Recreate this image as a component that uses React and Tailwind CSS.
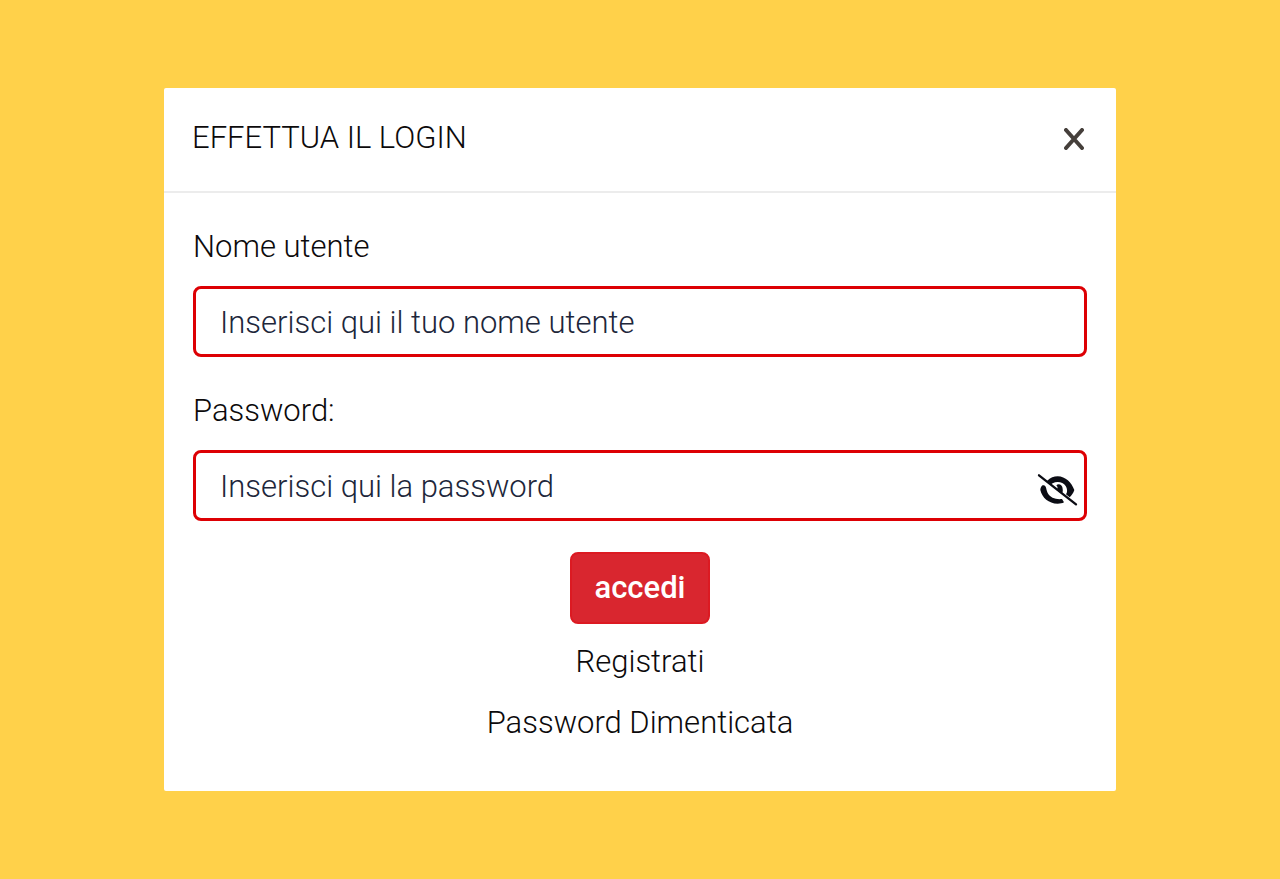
import React, { useState } from 'react';

function EyeSlashIcon() {
  return (
    <svg viewBox="0 0 123 102" className="w-[41px] h-[34px]" fill="none" aria-hidden="true">
      <path
        d="M30 24C40 13 51 10 62 10C86 11 103 28 112 51C109 60 104 67 98 73L87 64C92 57 91 47 86 39C79 29 62 23 47 31L42 34Z"
        fill="#0b0c14"
      />
      <path
        d="M15 38C11 42 10 47 10 51C15 74 35 92 62 92C70 92 76 91 81 88L75 78C57 80 40 75 32 60C29 53 28 46 26 41C23 37 18 36 15 38Z"
        fill="#0b0c14"
      />
      <path d="M58 37C65 30 77 36 77 48C78 54 77 59 74 62L58 50C63 48 63 42 58 37Z" fill="#0b0c14" />
      <path d="M6 7L117 94" stroke="#0b0c14" strokeWidth="7" strokeLinecap="round" />
    </svg>
  );
}

function Field({ id, label, children, ...props }) {
  return (
    <div>
      <label htmlFor={id} className="block mb-[15px] leading-[48px] text-[#0c0a0b]">
        {label}
      </label>
      <div className="flex items-center h-[71px] border-3 border-[#dd0004] rounded-lg">
        <input
          id={id}
          className="flex-1 min-w-0 h-full pl-6 pt-0.5 bg-transparent text-[#20263a] placeholder:text-[#20263a] placeholder:opacity-100 focus:outline-none"
          {...props}
        />
        {children}
      </div>
    </div>
  );
}

function App() {
  const [username, setUsername] = useState('');
  const [password, setPassword] = useState('');
  const [showPassword, setShowPassword] = useState(false);

  const handleSubmit = (e) => {
    e.preventDefault();
  };

  return (
    <main className="flex items-center justify-center min-h-screen bg-[#ffd14a] font-['Roboto',sans-serif] text-[31px] font-light">
      <div className="w-full max-w-[952px] bg-white rounded-xs">
        <header className="flex items-center justify-between h-[105px] pl-7 pr-8 pb-0.5 border-b-2 border-[#ececec]">
          <h1 className="text-[#0c0a0b]">EFFETTUA IL LOGIN</h1>
          <button type="button" aria-label="Chiudi">
            <svg viewBox="0 0 20 22" className="w-5 h-[22px]" fill="none" aria-hidden="true">
              <path d="M2 2L18 20M18 2L2 20" stroke="#453f3b" strokeWidth="4" strokeLinecap="round" />
            </svg>
          </button>
        </header>

        <form onSubmit={handleSubmit} className="flex flex-col px-[29px] pt-[30px] pb-11">
          <div className="flex flex-col gap-[30px]">
            <Field
              id="username"
              label="Nome utente"
              type="text"
              placeholder="Inserisci qui il tuo nome utente"
              value={username}
              onChange={(e) => setUsername(e.target.value)}
            />
            <Field
              id="password"
              label="Password:"
              type={showPassword ? 'text' : 'password'}
              placeholder="Inserisci qui la password"
              value={password}
              onChange={(e) => setPassword(e.target.value)}
            >
              <button
                type="button"
                aria-label="Mostra password"
                className="pr-1.5 pt-2"
                onClick={() => setShowPassword(!showPassword)}
              >
                <EyeSlashIcon />
              </button>
            </Field>
          </div>

          <button
            type="submit"
            className="self-center h-[72px] mt-[31px] px-[22px] border-2 border-[#dc1a22] rounded-lg bg-[#d9262f] text-white font-medium"
          >
            accedi
          </button>
          <nav className="flex flex-col items-center gap-[13px] mt-3.5 leading-[48px] text-[#0c0a0b]">
            <a href="#registrati">Registrati</a>
            <a href="#password">Password Dimenticata</a>
          </nav>
        </form>
      </div>
    </main>
  );
}

export default App;
